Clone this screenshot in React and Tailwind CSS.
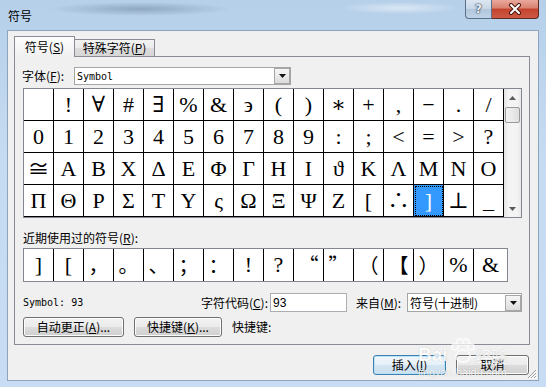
import React from 'react';

const cjk = "font-['Noto_Sans_CJK_SC',sans-serif]";
const serif = "font-['Liberation_Serif','DejaVu_Serif','Noto_Sans_CJK_SC',serif]";
const mono = "font-['DejaVu_Sans_Mono',monospace]";

const rows = [
  [' ', '!', '∀', '#', '∃', '%', '&', '϶', '(', ')', '∗', '+', ',', '−', '.', '/'],
  ['0', '1', '2', '3', '4', '5', '6', '7', '8', '9', ':', ';', '<', '=', '>', '?'],
  ['≅', 'Α', 'Β', 'Χ', 'Δ', 'Ε', 'Φ', 'Γ', 'Η', 'Ι', 'ϑ', 'Κ', 'Λ', 'Μ', 'Ν', 'Ο'],
  ['Π', 'Θ', 'Ρ', 'Σ', 'Τ', 'Υ', 'ς', 'Ω', 'Ξ', 'Ψ', 'Ζ', '[', '∴', ']', '⊥', '_'],
];

// recent symbols: char, font, horizontal placement
const recent = [
  [']', 'serif', 'center'],
  ['[', 'serif', 'center'],
  ['，', 'cjk', 'center'],
  ['。', 'cjk', 'center'],
  ['、', 'cjk', 'center'],
  ['；', 'cjk', 'center'],
  ['：', 'cjk', 'center'],
  ['!', 'serif', 'center'],
  ['?', 'serif', 'center'],
  ['“', 'cjk', 'center'],
  ['”', 'cjk', 'center'],
  ['（', 'cjk', 'center'],
  ['【', 'cjk', 'center'],
  ['）', 'cjk', 'center'],
  ['%', 'serif', 'center'],
  ['&', 'serif', 'center'],
];

const Key = ({ c }) => <span className="underline">{c}</span>;

function DropButton() {
  return (
    <div className="w-[16px] h-[16px] border border-[#a7a7a7] bg-[linear-gradient(180deg,#f6f6f6,#dcdcdc)] flex items-center justify-center">
      <svg width="7" height="4" viewBox="0 0 7 4">
        <path d="M0 0 L7 0 L3.5 4 Z" fill="#111" />
      </svg>
    </div>
  );
}

function WinButton({ children, w, primary }) {
  return (
    <div
      className={
        primary
          ? `${cjk} h-[20px] ${w} rounded-[3px] border border-[#3c7fb1] shadow-[inset_0_0_0_1px_#b7e2f8] bg-[linear-gradient(180deg,#f1f7fc_0%,#e6f0f8_50%,#d5e6f3_50%,#cbdfef_100%)] text-[12px] text-black flex items-center justify-center leading-none`
          : `${cjk} h-[20px] ${w} rounded-[3px] border border-[#707070] shadow-[inset_0_0_0_1px_#fcfcfc] bg-[linear-gradient(180deg,#f2f2f2_0%,#ebebeb_50%,#dddddd_50%,#cfcfcf_100%)] text-[12px] text-black flex items-center justify-center leading-none`
      }
    >
      {children}
    </div>
  );
}

export default function App() {
  return (
    <div className="relative w-[546px] h-[387px] overflow-hidden flex flex-col bg-[linear-gradient(180deg,#b6d0ea_0%,#c5dbf1_40%,#c8ddf3_100%)]">
      {/* title bar */}
      <div className="h-[30px] shrink-0 flex items-start justify-between bg-[radial-gradient(ellipse_90px_7px_at_140px_9px,rgba(70,90,115,0.35),transparent),radial-gradient(ellipse_60px_6px_at_400px_8px,rgba(255,255,255,0.5),transparent)]">
        <div className={`${cjk} text-[12px] leading-[16px] text-black pl-[8px] pt-[8px]`}>符号</div>
        <div className="flex mr-[7px]">
          <div className="w-[27px] h-[19px] border border-t-0 border-[#5a6f88] rounded-bl-[4px] bg-[linear-gradient(180deg,#dce7f2_0%,#c7d6e6_50%,#b2c6dc_50%,#c0d3e8_100%)] flex items-center justify-center">
            <span className="font-['DejaVu_Sans',sans-serif] text-[12px] font-bold leading-none text-[#e8eef5] [text-shadow:0_0_2px_#1c2e44,0_0_1px_#1c2e44]">?</span>
          </div>
          <div className="w-[47px] h-[19px] border border-t-0 border-l-0 border-[#5b2a24] rounded-br-[4px] bg-[linear-gradient(180deg,#e9a99c_0%,#d8806f_45%,#c4432e_50%,#cd5a44_100%)] flex items-center justify-center">
            <svg width="14" height="12" viewBox="0 0 14 12">
              <path d="M3 2 L11 10 M11 2 L3 10" stroke="#4a1810" strokeWidth="4" strokeLinecap="round" />
              <path d="M3 2 L11 10 M11 2 L3 10" stroke="#fff" strokeWidth="2" strokeLinecap="round" />
            </svg>
          </div>
        </div>
      </div>

      {/* client area */}
      <div className="relative ml-[7px] w-[532px] h-[351px] border border-[#8ea4bd] bg-[#f0f0f0] flex flex-col">
        {/* tabs */}
        <div className="relative z-10 flex items-end h-[21px] mt-[5px] ml-[6px] mb-[-1px]">
          <div className={`${cjk} w-[61px] h-[21px] border border-b-0 border-[#898c95] bg-[linear-gradient(180deg,#fdfdfd,#f0f0f0)] text-[12px] text-black flex items-center justify-center leading-none`}>
            符号(<Key c="S" />)
          </div>
          <div className={`${cjk} w-[80px] h-[18px] border border-l-0 border-[#898c95] bg-[linear-gradient(180deg,#f3f3f3_0%,#ebebeb_50%,#dddddd_50%,#d6d6d6_100%)] text-[12px] text-black flex items-center justify-center leading-none`}>
            特殊字符(<Key c="P" />)
          </div>
        </div>

        {/* tab panel */}
        <div className="ml-[6px] w-[516px] h-[289px] border border-[#898c95] bg-[#f0f0f0] flex flex-col pl-[7px]">
          {/* font row */}
          <div className="mt-[10px] h-[18px] flex items-center">
            <div className={`${cjk} w-[52px] text-[12px] text-black leading-none`}>
              字体(<Key c="F" />):
            </div>
            <div className="w-[217px] h-[18px] border border-[#a5a5a5] bg-white flex items-center justify-between">
              <span className={`${mono} text-[10px] text-black pl-[2px]`}>Symbol</span>
              <DropButton />
            </div>
          </div>

          {/* symbol grid */}
          <div className="mt-[3px] ml-[1px] w-[499px] h-[130px] border border-[#828790] bg-white flex">
            <div className="flex flex-col">
              {rows.map((row, r) => (
                <div key={r} className="flex">
                  {row.map((ch, c) => {
                    const sel = r === 3 && c === 13;
                    return (
                      <div
                        key={c}
                        className={
                          sel
                            ? `${serif} w-[30px] h-[32px] border-r border-b border-black bg-[#3399ff] text-white text-[22px] flex items-center justify-center leading-none outline-1 outline-dotted outline-black outline-offset-[-2px]`
                            : `${serif} w-[30px] h-[32px] border-r border-b border-black text-black text-[22px] flex items-center justify-center leading-none`
                        }
                      >
                        {ch}
                      </div>
                    );
                  })}
                </div>
              ))}
            </div>
            {/* scrollbar */}
            <div className="w-[17px] flex flex-col bg-[linear-gradient(90deg,#e3e3e3,#f4f4f4_25%,#f4f4f4_75%,#e8e8e8)]">
              <div className="h-[17px] flex items-center justify-center">
                <svg width="7" height="4" viewBox="0 0 7 4">
                  <path d="M0 4 L3.5 0 L7 4 Z" fill="#5a5a5a" />
                </svg>
              </div>
              <div className="h-[16px] mx-[1px] mt-[1px] rounded-[2px] border border-[#9a9a9a] bg-[linear-gradient(90deg,#f4f4f4,#dedede)]" />
              <div className="flex-1" />
              <div className="h-[17px] flex items-center justify-center">
                <svg width="7" height="4" viewBox="0 0 7 4">
                  <path d="M0 0 L7 0 L3.5 4 Z" fill="#5a5a5a" />
                </svg>
              </div>
            </div>
          </div>

          {/* recent label */}
          <div className={`${cjk} mt-[13px] h-[14px] ml-[1px] text-[12px] leading-[14px] text-black`}>
            近期使用过的符号(<Key c="R" />):
          </div>

          {/* recent row */}
          <div className="mt-[3px] ml-[1px] w-[485px] h-[34px] border border-[#828790] bg-white flex">
            {recent.map(([ch, f], i) => (
              <div
                key={i}
                className={
                  (i < 15 ? 'w-[30px] border-r border-black ' : 'flex-1 ') +
                  (f === 'serif'
                    ? `${serif} text-[22px] text-black flex items-center justify-center leading-none`
                    : `${cjk} text-[20px] text-black flex items-center justify-center leading-none`)
                }
              >
                {ch}
              </div>
            ))}
          </div>

          {/* info row */}
          <div className="mt-[11px] h-[19px] flex items-center ml-[1px]">
            <span className={`${mono} w-[170px] text-[10px] text-black`}>Symbol: 93</span>
            <span className={`${cjk} w-[77px] text-[12px] text-black text-right pr-[2px] leading-none`}>
              字符代码(<Key c="C" />):
            </span>
            <div className="w-[77px] h-[19px] border border-[#abadb3] bg-white flex items-center">
              <span className="font-['Liberation_Sans',sans-serif] text-[12px] text-black pl-[2px]">93</span>
            </div>
            <span className={`${cjk} ml-[9px] w-[51px] text-[12px] text-black leading-none`}>
              来自(<Key c="M" />):
            </span>
            <div className="w-[115px] h-[19px] border border-[#a5a5a5] bg-white flex items-center justify-between">
              <span className={`${cjk} text-[12px] text-black pl-[2px] leading-none`}>符号(十进制)</span>
              <DropButton />
            </div>
          </div>

          {/* buttons row */}
          <div className="mt-[5px] h-[20px] flex items-center ml-[1px]">
            <WinButton w="w-[101px]">
              自动更正(<Key c="A" />)...
            </WinButton>
            <div className="ml-[10px]">
              <WinButton w="w-[88px]">
                快捷键(<Key c="K" />)...
              </WinButton>
            </div>
            <span className={`${cjk} ml-[10px] text-[12px] text-black leading-none`}>快捷键:</span>
          </div>
        </div>

        {/* dialog buttons */}
        <div className="mt-[10px] flex justify-end gap-[10px] pr-[9px]">
          <WinButton w="w-[73px]" primary>
            插入(<Key c="I" />)
          </WinButton>
          <WinButton w="w-[73px]">取消</WinButton>
        </div>

        {/* size grip */}
        <svg className="absolute right-[1px] bottom-[1px]" width="11" height="11" viewBox="0 0 11 11">
          <path d="M10 2 L2 10 M10 5 L5 10 M10 8 L8 10" stroke="#a0a0a0" strokeWidth="1" />
          <path d="M11 3 L3 11 M11 6 L6 11 M11 9 L9 11" stroke="#ffffff" strokeWidth="1" />
        </svg>
      </div>

      {/* watermark */}
      <div className="pointer-events-none absolute left-[418px] top-[338px] flex flex-col opacity-80">
        <div className="flex items-end">
          <span className="font-['Liberation_Sans',sans-serif] text-[19px] font-bold leading-none text-white [text-shadow:0_0_1px_rgba(0,0,0,0.3)]">Bai</span>
          <svg width="26" height="26" viewBox="0 0 26 26" className="mx-[1px]">
            <g fill="none" stroke="#fff" strokeWidth="2" opacity="0.9">
              <circle cx="6" cy="9" r="3" />
              <circle cx="11" cy="4" r="3" />
              <circle cx="17" cy="4" r="3" />
              <circle cx="22" cy="9" r="3" />
              <ellipse cx="14" cy="18" rx="7" ry="6" />
            </g>
          </svg>
          <span className={`${cjk} text-[16px] leading-none text-white [text-shadow:0_0_1px_rgba(0,0,0,0.3)]`}>经验</span>
        </div>
        <span className="font-['Liberation_Sans',sans-serif] text-[11px] leading-none mt-[3px] text-white [text-shadow:0_0_1px_rgba(0,0,0,0.3)]">jingyan.baidu.com</span>
      </div>
    </div>
  );
}
